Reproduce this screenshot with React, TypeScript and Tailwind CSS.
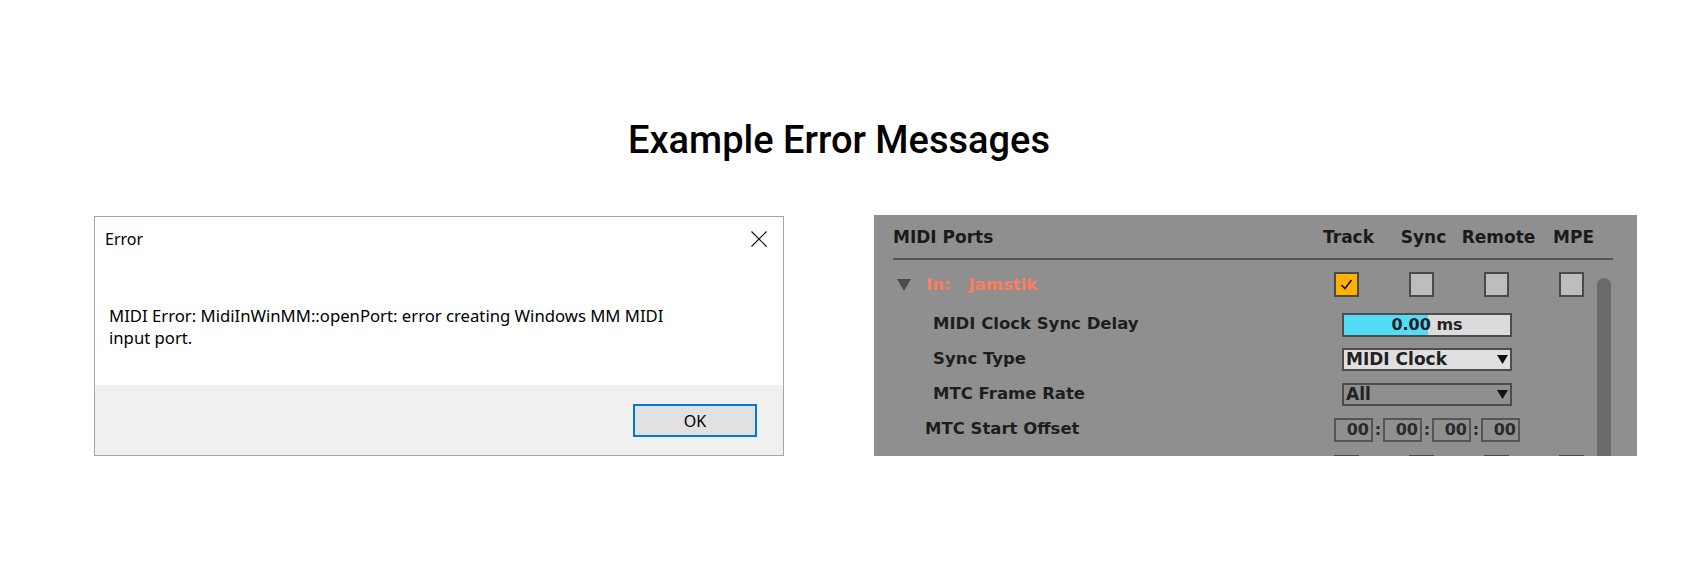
import React from 'react';
import clsx from 'clsx';

const abl = "font-['DejaVu_Sans',sans-serif] font-bold";

function CheckBox({ checked }: { checked?: boolean }) {
  return (
    <div
      className={clsx(
        'w-[25px] h-[25px] border-2 border-[#4a4a4a] flex items-center justify-center shrink-0',
        checked ? 'bg-[#ffb100]' : 'bg-[#bdbdbd]'
      )}
    >
      {checked && (
        <svg width="21" height="21" viewBox="0 0 21 21">
          <path d="M5.5 11 L9 14.5 L15.5 6" fill="none" stroke="#111" strokeWidth="1.6" />
        </svg>
      )}
    </div>
  );
}

function PortChecks() {
  return (
    <div className="flex gap-[50px]">
      <CheckBox checked />
      <CheckBox />
      <CheckBox />
      <CheckBox />
    </div>
  );
}

function DownArrow() {
  return (
    <svg width="11" height="9" viewBox="0 0 11 9">
      <path d="M0 0 H11 L5.5 9 Z" fill="#111" />
    </svg>
  );
}

function Chooser({ value, filled }: { value: string; filled?: boolean }) {
  return (
    <div
      className={clsx(
        'ml-[8px] w-[170px] h-[23px] border-2 border-[#4d4d4d] flex items-center justify-between pl-[2px] pr-[2px]',
        filled ? 'bg-[#e0e0e0]' : 'bg-transparent'
      )}
    >
      <span className={clsx(abl, 'text-[17px] leading-[19px] text-[#222]')}>{value}</span>
      <DownArrow />
    </div>
  );
}

function OffsetField() {
  return (
    <div className="w-[39px] h-[24px] border-2 border-[#555] flex items-center justify-end pr-[2px]">
      <span className={clsx(abl, 'text-[16px] leading-[18px] text-[#2a2a2a]')}>00</span>
    </div>
  );
}

function Colon() {
  return <span className={clsx(abl, 'w-[10px] text-center text-[16px] leading-[18px] text-[#2a2a2a]')}>:</span>;
}

function Row({ label, children, className }: { label: React.ReactNode; children?: React.ReactNode; className?: string }) {
  return (
    <div className={clsx('flex items-center h-[35px]', className)}>
      <div className="w-[460px] pb-[1px] flex items-center">{label}</div>
      {children}
    </div>
  );
}

function SubLabel({ text, indent }: { text: string; indent: string }) {
  return <span className={clsx(abl, indent, 'text-[16.5px] leading-[20px] text-[#1e1e1e] whitespace-nowrap')}>{text}</span>;
}

function MidiPortsPanel() {
  return (
    <div className="w-[763px] h-[241px] bg-[#8f8f8f] overflow-hidden shrink-0">
      <div className={clsx(abl, 'flex items-center pt-[12px] text-[17px] leading-[20px] text-[#1a1a1a]')}>
        <div className="w-[437px] pl-[19px]">MIDI Ports</div>
        {['Track', 'Sync', 'Remote', 'MPE'].map((h) => (
          <div key={h} className="w-[75px] text-center whitespace-nowrap">
            {h}
          </div>
        ))}
      </div>
      <div className="ml-[19px] mr-[24px] mt-[11px] h-[2px] bg-[#555]" />

      <div className="flex">
        <div className="w-[723px] pt-[7px]">
          <Row
            label={
              <div className="flex items-center pt-[2px]">
                <svg className="ml-[23px]" width="14" height="12" viewBox="0 0 14 12">
                  <path d="M0 0 H14 L7 12 Z" fill="#4c4c4c" />
                </svg>
                <span className={clsx(abl, 'ml-[15px] text-[16.5px] leading-[20px] text-[#ff7d5e]')}>In:</span>
                <span className={clsx(abl, 'ml-[18px] text-[16.5px] leading-[20px] text-[#ff7d5e]')}>Jamstik</span>
              </div>
            }
          >
            <PortChecks />
          </Row>

          <Row className="mt-[5px]" label={<SubLabel text="MIDI Clock Sync Delay" indent="pl-[59px]" />}>
            <div className="ml-[8px] w-[170px] h-[24px] border-2 border-[#4d4d4d] bg-[linear-gradient(to_right,#54dbf5_84px,#dcdcdc_84px)] flex items-center justify-center">
              <span className={clsx(abl, 'text-[16px] leading-[18px] text-[#222]')}>0.00 ms</span>
            </div>
          </Row>

          <Row label={<SubLabel text="Sync Type" indent="pl-[59px]" />}>
            <Chooser value="MIDI Clock" filled />
          </Row>

          <Row label={<SubLabel text="MTC Frame Rate" indent="pl-[59px]" />}>
            <Chooser value="All" />
          </Row>

          <Row label={<SubLabel text="MTC Start Offset" indent="pl-[51px]" />}>
            <div className="flex items-center">
              <OffsetField />
              <Colon />
              <OffsetField />
              <Colon />
              <OffsetField />
              <Colon />
              <OffsetField />
            </div>
          </Row>

          <Row className="mt-[3px]" label={null}>
            <PortChecks />
          </Row>
        </div>
        <div className="w-[14px] mt-[18px] h-[300px] rounded-t-full bg-[#6a6a6a]" />
      </div>
    </div>
  );
}

function ErrorDialog() {
  return (
    <div className="w-[690px] h-[240px] mt-[1px] border border-[#a6a6a6] bg-white flex flex-col shrink-0 font-['Noto_Sans',sans-serif] text-black">
      <div className="h-[168px]">
        <div className="flex items-center justify-between pt-[11px] pl-[10px] pr-[16px]">
          <span className="text-[16px] leading-[22px]">Error</span>
          <svg width="16" height="16" viewBox="0 0 16 16">
            <path d="M0.5 0.5 L15.5 15.5 M15.5 0.5 L0.5 15.5" stroke="#111" strokeWidth="1.2" />
          </svg>
        </div>
        <p className="mt-[55px] pl-[14px] text-[16.7px] leading-[22px]">
          MIDI Error: MidiInWinMM::openPort: error creating Windows MM MIDI
          <br />
          input port.
        </p>
      </div>
      <div className="flex-1 bg-[#f0f0f0] flex justify-end items-start pt-[19px] pr-[26px]">
        <button className="w-[124px] h-[33px] border-2 border-[#0078d7] bg-[#e1e1e1] text-[16px] leading-[20px] flex items-center justify-center">
          OK
        </button>
      </div>
    </div>
  );
}

export default function App() {
  return (
    <div className="w-full h-[562px] bg-white overflow-hidden">
      <div className="pt-[118px] pr-[24px] text-center">
        <h1 className="font-['Roboto',sans-serif] font-medium text-[38px] leading-[44px] text-black">
          Example Error Messages
        </h1>
      </div>
      <div className="flex items-start pl-[94px] gap-[90px] mt-[53px]">
        <ErrorDialog />
        <MidiPortsPanel />
      </div>
    </div>
  );
}
